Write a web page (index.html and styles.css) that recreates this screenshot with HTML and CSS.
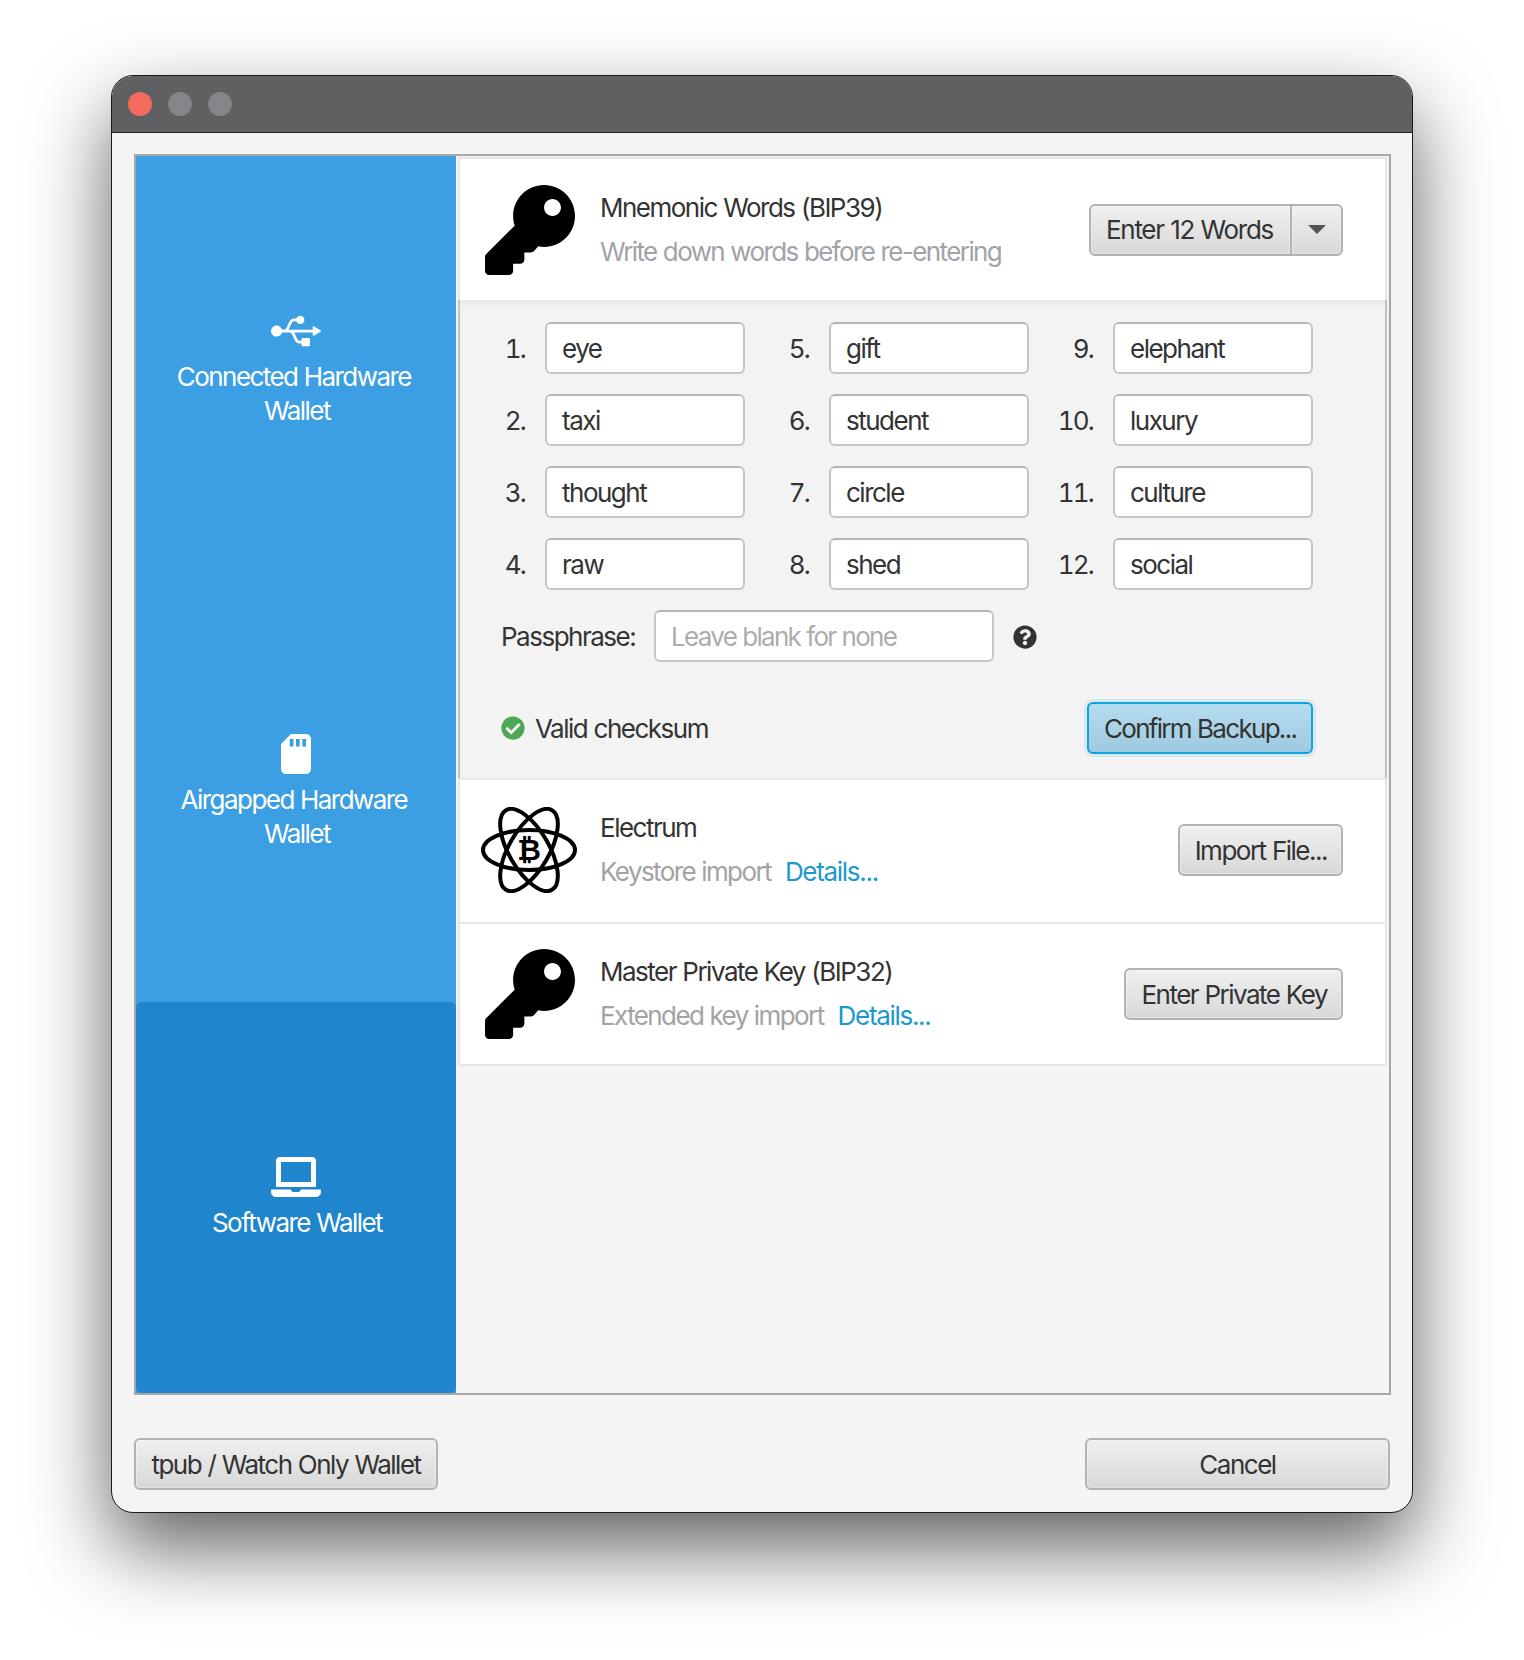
FILE: index.html
```html
<!DOCTYPE html>
<html lang="en">
<head>
    <meta charset="UTF-8">
    <meta name="viewport" content="width=device-width, initial-scale=1.0">
    <title>Import Wallet</title>
    <link rel="stylesheet" href="styles.css">
</head>
<body>
    <div class="window">
        <div class="titlebar">
            <span class="light light-close"></span>
            <span class="light"></span>
            <span class="light"></span>
        </div>
        <div class="content">
            <div class="panel">
                <div class="sidebar">
                    <div class="side-item">
                        <svg class="side-icon" viewBox="0 0 640 512"><path d="M641.5 256c0 3.1-1.7 6.1-4.5 7.5L547.9 317c-1.4.8-2.8 1.4-4.5 1.4-1.4 0-3.1-.3-4.5-1.1-2.8-1.7-4.5-4.5-4.5-7.8v-35.6H295.7c25.3 39.6 40.5 106.9 69.6 106.9H392V354c0-5 3.9-8.9 8.9-8.9H490c5 0 8.9 3.9 8.9 8.9v89.1c0 5-3.9 8.9-8.9 8.9h-89.1c-5 0-8.9-3.9-8.9-8.9v-26.7h-26.7c-75.4 0-81.1-142.5-124.7-142.5H140.3c-8.1 30.6-35.9 53.5-69 53.5C32 327.3 0 295.3 0 256s32-71.3 71.3-71.3c33.1 0 61 22.8 69 53.5 39.1 0 43.9 9.5 74.6-60.4C255 88.7 273 95.7 323.8 95.7c7.5-20.9 27-35.6 50.4-35.6 29.5 0 53.5 23.9 53.5 53.5s-23.9 53.5-53.5 53.5c-23.4 0-42.9-14.8-50.4-35.6H294c-29.1 0-44.3 67.4-69.6 106.9h310.1v-35.6c0-3.3 1.7-6.1 4.5-7.8 2.8-1.7 6.4-1.4 8.9.3l89.1 53.5c2.8 1.1 4.5 4.1 4.5 7.2z"/></svg>
                        <div class="side-label">Connected Hardware&nbsp;<br>Wallet</div>
                    </div>
                    <div class="side-item">
                        <svg class="side-icon" viewBox="0 0 384 512"><path d="M320 0H128L0 128v320c0 35.3 28.7 64 64 64h256c35.3 0 64-28.7 64-64V64c0-35.3-28.7-64-64-64zM160 160h-48V64h48v96zm80 0h-48V64h48v96zm80 0h-48V64h48v96z"/></svg>
                        <div class="side-label">Airgapped Hardware&nbsp;<br>Wallet</div>
                    </div>
                    <div class="side-item side-active">
                        <svg class="side-icon" viewBox="0 0 640 512"><path d="M624 416H381.54c-.74 19.81-14.71 32-32.74 32H288c-18.69 0-33.02-17.47-32.77-32H16c-8.8 0-16 7.2-16 16v16c0 35.2 28.8 64 64 64h512c35.2 0 64-28.8 64-64v-16c0-8.8-7.2-16-16-16zM576 48c0-26.4-21.6-48-48-48H112C85.6 0 64 21.6 64 48v336h512V48zm-64 272H128V64h384v256z"/></svg>
                        <div class="side-label">Software Wallet</div>
                    </div>
                </div>
                <div class="main">
                    <div class="row row-top">
                        <svg class="row-icon key" viewBox="0 0 512 512"><path d="M512 176.001C512 273.203 433.202 352 336 352c-11.22 0-22.19-1.062-32.827-3.069l-24.012 27.014A23.999 23.999 0 0 1 261.223 384H224v40c0 13.255-10.745 24-24 24h-40v40c0 13.255-10.745 24-24 24H24c-13.255 0-24-10.745-24-24v-78.059c0-6.365 2.529-12.47 7.029-16.971l161.802-161.802C163.108 213.814 160 195.271 160 176 160 78.798 238.797.001 335.999 0 433.488-.001 512 78.511 512 176.001zM336 128c0 26.51 21.49 48 48 48s48-21.49 48-48-21.49-48-48-48-48 21.49-48 48z"/></svg>
                        <div class="row-text">
                            <div class="row-title">Mnemonic Words (BIP39)</div>
                            <div class="row-sub">Write down words before re-entering</div>
                        </div>
                        <div class="split-btn">
                            <button class="btn split-main">Enter 12 Words</button>
                            <button class="btn split-arrow"><span class="caret"></span></button>
                        </div>
                    </div>

                    <div class="words">
                        <div class="word-grid">
                            <div class="word"><span class="num">1.</span><span class="field">eye</span></div>
                            <div class="word"><span class="num">5.</span><span class="field">gift</span></div>
                            <div class="word"><span class="num">9.</span><span class="field">elephant</span></div>
                            <div class="word"><span class="num">2.</span><span class="field">taxi</span></div>
                            <div class="word"><span class="num">6.</span><span class="field">student</span></div>
                            <div class="word"><span class="num">10.</span><span class="field">luxury</span></div>
                            <div class="word"><span class="num">3.</span><span class="field">thought</span></div>
                            <div class="word"><span class="num">7.</span><span class="field">circle</span></div>
                            <div class="word"><span class="num">11.</span><span class="field">culture</span></div>
                            <div class="word"><span class="num">4.</span><span class="field">raw</span></div>
                            <div class="word"><span class="num">8.</span><span class="field">shed</span></div>
                            <div class="word"><span class="num">12.</span><span class="field">social</span></div>
                        </div>
                        <div class="pass-row">
                            <span class="pass-label">Passphrase:</span>
                            <span class="field pass-field">Leave blank for none</span>
                            <svg class="help" viewBox="0 0 512 512"><path d="M504 256c0 136.997-111.043 248-248 248S8 392.997 8 256C8 119.083 119.043 8 256 8s248 111.083 248 248zM262.655 90c-54.497 0-89.255 22.957-116.549 63.758-3.536 5.286-2.353 12.415 2.715 16.258l34.699 26.31c5.205 3.947 12.621 3.008 16.665-2.122 17.864-22.658 30.113-35.797 57.303-35.797 20.429 0 45.698 13.148 45.698 32.958 0 14.976-12.363 22.667-32.534 33.976C247.128 238.528 216 254.941 216 296v4c0 6.627 5.373 12 12 12h56c6.627 0 12-5.373 12-12v-1.333c0-28.462 83.186-29.647 83.186-106.667 0-58.002-60.165-102-116.531-102zM256 338c-25.365 0-46 20.635-46 46 0 25.364 20.635 46 46 46s46-20.636 46-46c0-25.365-20.635-46-46-46z"/></svg>
                        </div>
                        <div class="check-row">
                            <svg class="check" viewBox="0 0 512 512"><path d="M504 256c0 136.967-111.033 248-248 248S8 392.967 8 256 119.033 8 256 8s248 111.033 248 248zM227.314 387.314l184-184c6.248-6.248 6.248-16.379 0-22.627l-22.627-22.627c-6.248-6.249-16.379-6.25-22.628 0L216 308.118l-70.059-70.059c-6.248-6.248-16.379-6.248-22.628 0l-22.627 22.627c-6.248 6.248-6.248 16.379 0 22.627l104 104c6.249 6.249 16.379 6.249 22.628.001z"/></svg>
                            <span class="check-text">Valid checksum</span>
                            <button class="btn btn-focus">Confirm Backup...</button>
                        </div>
                    </div>

                    <div class="row row-electrum">
                        <svg class="row-icon" viewBox="0 0 96 86">
                            <g class="atom">
                                <ellipse cx="48" cy="43" rx="46" ry="20"/>
                                <ellipse cx="48" cy="43" rx="46" ry="20" transform="rotate(60 48 43)"/>
                                <ellipse cx="48" cy="43" rx="46" ry="20" transform="rotate(-60 48 43)"/>
                            </g>
                            <text class="atom-coin" x="48" y="53">₿</text>
                        </svg>
                        <div class="row-text">
                            <div class="row-title">Electrum</div>
                            <div class="row-sub">Keystore import<a class="details">Details...</a></div>
                        </div>
                        <button class="btn btn-compact">Import File...</button>
                    </div>

                    <div class="row row-master">
                        <svg class="row-icon key" viewBox="0 0 512 512"><path d="M512 176.001C512 273.203 433.202 352 336 352c-11.22 0-22.19-1.062-32.827-3.069l-24.012 27.014A23.999 23.999 0 0 1 261.223 384H224v40c0 13.255-10.745 24-24 24h-40v40c0 13.255-10.745 24-24 24H24c-13.255 0-24-10.745-24-24v-78.059c0-6.365 2.529-12.47 7.029-16.971l161.802-161.802C163.108 213.814 160 195.271 160 176 160 78.798 238.797.001 335.999 0 433.488-.001 512 78.511 512 176.001zM336 128c0 26.51 21.49 48 48 48s48-21.49 48-48-21.49-48-48-48-48 21.49-48 48z"/></svg>
                        <div class="row-text">
                            <div class="row-title">Master Private Key (BIP32)</div>
                            <div class="row-sub">Extended key import<a class="details">Details...</a></div>
                        </div>
                        <button class="btn btn-compact">Enter Private Key</button>
                    </div>
                </div>
            </div>
            <div class="footer">
                <button class="btn btn-tpub">tpub / Watch Only Wallet</button>
                <button class="btn btn-cancel">Cancel</button>
            </div>
        </div>
    </div>
</body>
</html>
```

FILE: styles.css
```css
* {
    box-sizing: border-box;
}
body {
    margin: 0;
    padding: 75px 0 0 111px;
    height: 1660px;
    overflow: hidden;
    background-color: #FFFFFF;
    font-family: Inter, "Liberation Sans", sans-serif;
    font-size: 26px;
    letter-spacing: -1.5px;
    word-spacing: 0.5px;
    color: #333333;
}
.window {
    width: 1302px;
    height: 1438px;
    display: flex;
    flex-direction: column;
    border: 1px solid #1A1A1A;
    border-radius: 22px;
    overflow: hidden;
    background-color: #F4F4F4;
    box-shadow: 0 35px 80px rgba(0, 0, 0, 0.62);
}
.titlebar {
    height: 57px;
    flex-shrink: 0;
    display: flex;
    align-items: center;
    gap: 16px;
    padding-left: 16px;
    background-color: #5F6062;
    border-bottom: 1px solid #222222;
}
.light {
    width: 24px;
    height: 24px;
    border-radius: 50%;
    background-color: #858689;
}
.light-close {
    background-color: #F26B5E;
}
.content {
    flex: 1;
    padding: 21px 21px 21px 22px;
    display: flex;
    flex-direction: column;
}
.panel {
    height: 1241px;
    display: flex;
    border: 2px solid #A8A8A8;
}
.sidebar {
    width: 320px;
    flex-shrink: 0;
    display: grid;
    grid-template-rows: 423px 423px 1fr;
    background-color: #3D9FE3;
    color: #FFFFFF;
    text-align: center;
}
.side-item {
    display: flex;
    flex-direction: column;
    align-items: center;
    justify-content: center;
    gap: 9px;
    padding: 4px 0 0 2px;
}
.side-active {
    padding-top: 2px;
    background-color: #1F86CE;
    border-radius: 6px;
}
.side-icon {
    height: 40px;
    width: 50px;
    fill: #FFFFFF;
    margin-right: 2px;
}
.side-label {
    line-height: 34px;
    letter-spacing: -1.55px;
}
.main {
    flex: 1;
    min-width: 0;
    padding: 1px 2px 0 2px;
}
.row {
    display: flex;
    align-items: center;
    padding: 0 42px 0 21px;
    background-color: #FFFFFF;
    border: 2px solid #E6E6E6;
}
.row-top {
    height: 143px;
    border-bottom-width: 0;
}
.row-electrum {
    height: 146px;
    padding-bottom: 2px;
}
.row-master {
    height: 142px;
    border-top-width: 0;
}
.row-icon {
    width: 96px;
    height: 86px;
    flex-shrink: 0;
    margin-right: 23px;
}
.key {
    padding-left: 4px;
    padding-right: 2px;
    height: 90px;
}
.atom {
    fill: none;
    stroke: #000000;
    stroke-width: 4;
}
.atom-coin {
    font-family: "DejaVu Sans", sans-serif;
    font-weight: bold;
    font-size: 29px;
    letter-spacing: 0;
    text-anchor: middle;
    fill: #000000;
}
.row-text {
    flex: 1;
    min-width: 0;
}
.row-title {
    line-height: 32px;
    margin-bottom: 12px;
}
.row-sub {
    line-height: 32px;
    letter-spacing: -1.6px;
    color: #A2A2A7;
}
.details {
    margin-left: 14px;
    letter-spacing: -1.3px;
    color: #1B98CC;
}
.btn {
    height: 52px;
    padding: 0 15px;
    font: inherit;
    letter-spacing: inherit;
    word-spacing: inherit;
    color: #333333;
    border: 2px solid #B2B2B2;
    border-radius: 6px;
    background: linear-gradient(#F0F0F0, #D8D8D8);
    box-shadow: inset 0 0 0 1px rgba(255, 255, 255, 0.35);
    white-space: nowrap;
}
.btn-compact {
    padding-right: 14px;
}
.btn-tpub {
    width: 304px;
}
.split-btn {
    display: flex;
}
.split-main {
    width: 202px;
    padding: 0 2px 0 0;
    letter-spacing: -1.3px;
    border-radius: 6px 0 0 6px;
    border-right-width: 1px;
}
.split-arrow {
    width: 52px;
    padding: 0;
    border-radius: 0 6px 6px 0;
    border-left-width: 1px;
}
.caret {
    display: block;
    width: 0;
    height: 0;
    margin: 0 auto;
    border-left: 9px solid transparent;
    border-right: 9px solid transparent;
    border-top: 9px solid #555555;
}
.words {
    height: 478px;
    padding: 22px 0 0 26px;
    border: solid #C2C2C2;
    border-width: 0 2px;
    background: linear-gradient(#E9E9E9, #F3F3F3 10px);
}
.word-grid {
    display: grid;
    grid-template-columns: repeat(3, 259px);
    column-gap: 25px;
    row-gap: 20px;
}
.word {
    display: flex;
    align-items: center;
}
.num {
    width: 39px;
    margin-right: 20px;
    text-align: right;
    flex-shrink: 0;
    font-variant-numeric: tabular-nums;
    letter-spacing: -1.8px;
}
.field {
    width: 200px;
    height: 52px;
    display: flex;
    align-items: center;
    padding-left: 15px;
    background-color: #FFFFFF;
    border: 2px solid #C6C6C6;
    border-top-color: #B8B8B8;
    border-radius: 6px;
}
.pass-row {
    display: flex;
    align-items: center;
    margin-top: 20px;
    padding-left: 15px;
}
.pass-label {
    width: 153px;
    flex-shrink: 0;
}
.pass-field {
    width: 340px;
    letter-spacing: -1.7px;
    color: #ACACAC;
}
.help {
    width: 24px;
    height: 24px;
    margin: 2px 0 0 19px;
    fill: #333333;
}
.check-row {
    display: flex;
    align-items: center;
    margin-top: 40px;
    padding-left: 15px;
}
.check {
    width: 24px;
    height: 24px;
    margin-right: 10px;
    fill: #4FA653;
}
.check-text {
    width: 552px;
}
.btn-focus {
    width: 226px;
    letter-spacing: -1.7px;
    border-color: #0EA3DA;
    background: linear-gradient(#B5DDF0, #9EC9E0);
    box-shadow: 0 0 0 3px rgba(14, 163, 218, 0.12);
}
.footer {
    display: flex;
    justify-content: space-between;
    margin-top: 43px;
}
.btn-cancel {
    width: 305px;
    margin-right: 1px;
}
```
